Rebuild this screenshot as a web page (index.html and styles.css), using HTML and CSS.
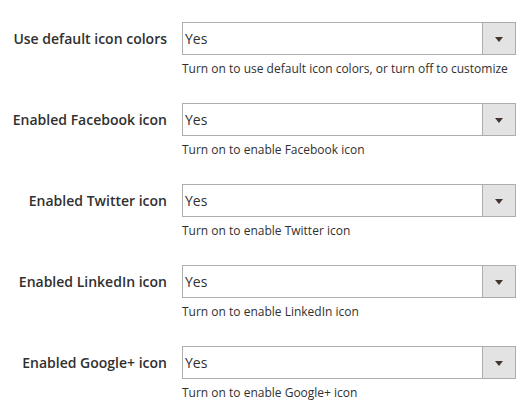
FILE: index.html
```html
<!DOCTYPE html>
<html>
<head>
<meta charset="utf-8">
<link rel="stylesheet" href="styles.css">
</head>
<body>
<div class="form">
  <div class="row">
    <div class="label">Use default icon colors</div>
    <div class="control">
      <div class="select"><span class="value">Yes</span><span class="btn"><span class="arrow"></span></span></div>
      <div class="note">Turn on to use default icon colors, or turn off to customize</div>
    </div>
  </div>
  <div class="row">
    <div class="label">Enabled Facebook icon</div>
    <div class="control">
      <div class="select"><span class="value">Yes</span><span class="btn"><span class="arrow"></span></span></div>
      <div class="note">Turn on to enable Facebook icon</div>
    </div>
  </div>
  <div class="row">
    <div class="label">Enabled Twitter icon</div>
    <div class="control">
      <div class="select"><span class="value">Yes</span><span class="btn"><span class="arrow"></span></span></div>
      <div class="note">Turn on to enable Twitter icon</div>
    </div>
  </div>
  <div class="row">
    <div class="label">Enabled LinkedIn icon</div>
    <div class="control">
      <div class="select"><span class="value">Yes</span><span class="btn"><span class="arrow"></span></span></div>
      <div class="note">Turn on to enable LinkedIn icon</div>
    </div>
  </div>
  <div class="row">
    <div class="label">Enabled Google+ icon</div>
    <div class="control">
      <div class="select"><span class="value">Yes</span><span class="btn"><span class="arrow"></span></span></div>
      <div class="note">Turn on to enable Google+ icon</div>
    </div>
  </div>
</div>
</body>
</html>
```
FILE: styles.css
```css
html, body {
  margin: 0;
  padding: 0;
  background: #ffffff;
}
body {
  font-family: "Open Sans", "Liberation Sans", sans-serif;
  color: #303030;
}
.form {
  display: flex;
  flex-direction: column;
  gap: 26px;
  padding-top: 22px;
}
.row {
  display: flex;
  gap: 15px;
}
.label {
  width: 167px;
  text-align: right;
  font-size: 14px;
  font-weight: 600;
  line-height: 33px;
  white-space: nowrap;
}
.control {
  width: 334px;
}
.select {
  display: flex;
  height: 33px;
  box-sizing: border-box;
  border: 1px solid #adadad;
  background: #fff;
}
.value {
  flex: 1;
  font-size: 14px;
  line-height: 31px;
  padding-left: 2px;
}
.btn {
  width: 32px;
  border-left: 1px solid #adadad;
  background: #e3e3e3;
  display: flex;
  align-items: center;
  justify-content: center;
}
.arrow {
  width: 0;
  height: 0;
  border-left: 4px solid transparent;
  border-right: 4px solid transparent;
  border-top: 5px solid #41362f;
  margin-top: 1px;
}
.note {
  margin-top: 6px;
  font-size: 12px;
  line-height: 16px;
  white-space: nowrap;
}
```
